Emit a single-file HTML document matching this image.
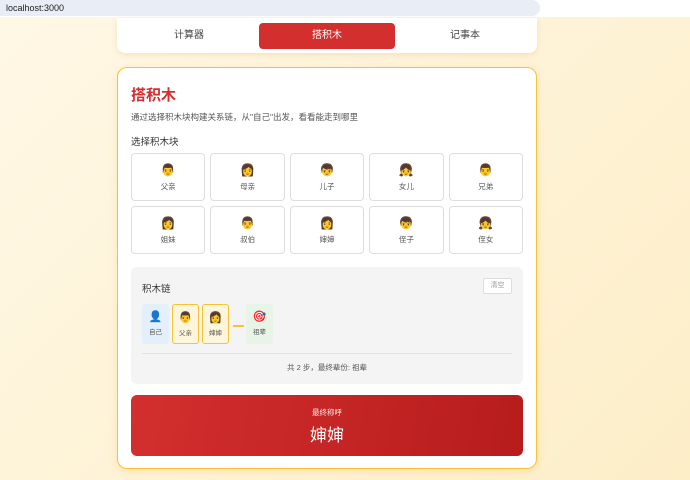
<!DOCTYPE html>
<html><head><meta charset="utf-8"><style>
*{box-sizing:border-box;margin:0;padding:0}
body{width:690px;height:480px;overflow:hidden;font-family:"Liberation Sans","Noto Sans CJK SC",sans-serif;background:linear-gradient(135deg,#fff8e6,#fdeec8);position:relative}
.bar{position:absolute;left:0;top:0;width:690px;height:17px;background:#fff}
.url{position:absolute;left:0;top:0;width:540px;height:16px;background:#e9eef6;border-radius:0 8px 8px 0;font-size:9px;line-height:16px;padding-left:6px;color:#222}
.tabs{position:absolute;left:117px;top:18px;width:420px;height:35px;background:#fff;border-radius:0 0 8px 8px;box-shadow:0 2px 6px rgba(200,150,50,.2);display:flex;align-items:center;padding:0 4px}
.tab{flex:1;text-align:center;font-size:10px;color:#444;height:26px;line-height:26px}
.tab.on{background:#d32f2f;color:#fff;border-radius:4px;margin:0 2px}
.card{position:absolute;left:117px;top:67px;width:420px;height:402px;background:#fff;border:1.5px solid #f7c234;border-radius:10px;box-shadow:0 2px 8px rgba(240,180,60,.25)}
h1{position:absolute;left:13px;top:16px;font-size:15px;color:#d32f2f;font-weight:bold}
.desc{position:absolute;left:13px;top:43px;font-size:8.5px;color:#555}
.lab{position:absolute;left:13px;top:66px;font-size:9.5px;color:#333}
.grid{position:absolute;left:13px;top:85px;width:392px;display:grid;grid-template-columns:repeat(5,1fr);column-gap:5px;row-gap:5px}
.b{height:48px;border:1.5px solid #ddd;border-radius:4px;text-align:center;font-size:7.5px;color:#555}
.b i{display:block;font-style:normal;font-size:12px;margin-top:9px;margin-bottom:4px}
.chain{position:absolute;left:13px;top:199px;width:392px;height:117px;background:#f4f4f4;border-radius:6px}
.ct{position:absolute;left:11px;top:14px;font-size:9.5px;color:#333}
.clr{position:absolute;right:11px;top:11px;width:29px;height:16px;border:1px solid #ddd;background:#fff;border-radius:2px;font-size:7px;color:#999;text-align:center;line-height:14px}
.n{position:absolute;top:37px;width:27px;height:40px;border-radius:3px;text-align:center;font-size:6.5px;color:#555}
.n i{display:block;font-style:normal;font-size:11px;margin-top:6px;margin-bottom:3px}
.hr{position:absolute;left:11px;right:11px;top:86px;border-top:1px solid #e2e2e2}
.sum{position:absolute;left:0;right:0;top:95px;text-align:center;font-size:7.5px;color:#555}
.res{position:absolute;left:13px;top:327px;width:392px;height:61px;border-radius:6px;background:linear-gradient(100deg,#d32f2f,#b71c1c);color:#fff;text-align:center}
.res .s{font-size:7.5px;margin-top:12px;opacity:.9}
.res .t{font-size:17px;margin-top:3px}
</style></head><body>
<div class="bar"><div class="url">localhost:3000</div></div>
<div class="tabs"><div class="tab">计算器</div><div class="tab on">搭积木</div><div class="tab">记事本</div></div>
<div class="card">
<h1>搭积木</h1>
<div class="desc">通过选择积木块构建关系链，从"自己"出发，看看能走到哪里</div>
<div class="lab">选择积木块</div>
<div class="grid">
<div class="b"><i>👨</i>父亲</div><div class="b"><i>👩</i>母亲</div><div class="b"><i>👦</i>儿子</div><div class="b"><i>👧</i>女儿</div><div class="b"><i>👨</i>兄弟</div>
<div class="b"><i>👩</i>姐妹</div><div class="b"><i>👨</i>叔伯</div><div class="b"><i>👩</i>婶婶</div><div class="b"><i>👦</i>侄子</div><div class="b"><i>👧</i>侄女</div>
</div>
<div class="chain">
<div class="ct">积木链</div><div class="clr">清空</div>
<div class="n" style="left:11px;background:#e3f0fb"><i>👤</i>自己</div>
<div class="n" style="left:41px;background:#fdf5dc;border:1.5px solid #f7c234"><i>👨</i>父亲</div>
<div class="n" style="left:71px;background:#fdf5dc;border:1.5px solid #f7c234"><i>👩</i>婶婶</div>
<div style="position:absolute;left:102px;top:58px;width:11px;border-top:2px solid #f7c234"></div>
<div class="n" style="left:115px;background:#e8f4e8"><i>🎯</i>祖辈</div>
<div class="hr"></div>
<div class="sum">共 2 步，最终辈份: 祖辈</div>
</div>
<div class="res"><div class="s">最终称呼</div><div class="t">婶婶</div></div>
</div>
</body></html>
